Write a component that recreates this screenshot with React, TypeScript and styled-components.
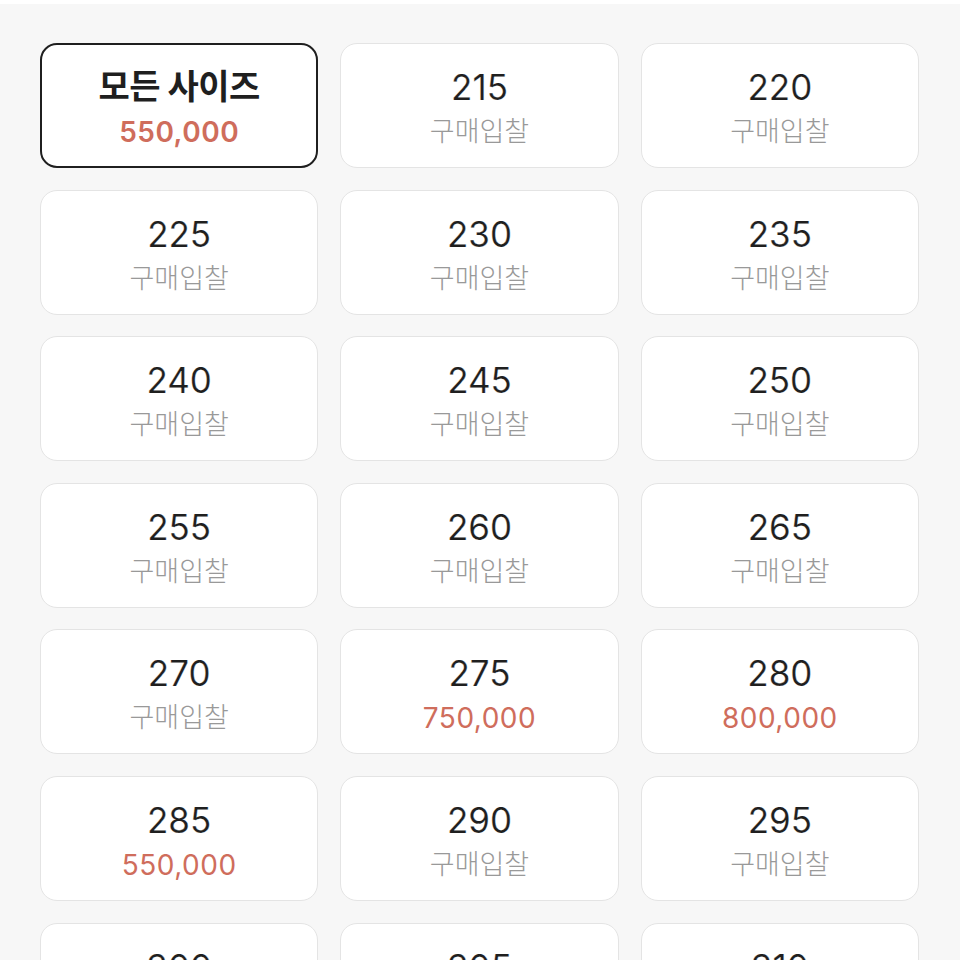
import React from 'react'
import styled, { createGlobalStyle } from 'styled-components'

const GlobalStyle = createGlobalStyle`
  html, body {
    margin: 0;
    padding: 0;
    background: #f7f7f7;
  }
  body {
    font-family: "Inter", "Noto Sans CJK KR", sans-serif;
  }
`

interface SizeItem {
  label: string
  price?: string
}

const sizes: SizeItem[] = [
  { label: '215' },
  { label: '220' },
  { label: '225' },
  { label: '230' },
  { label: '235' },
  { label: '240' },
  { label: '245' },
  { label: '250' },
  { label: '255' },
  { label: '260' },
  { label: '265' },
  { label: '270' },
  { label: '275', price: '750,000' },
  { label: '280', price: '800,000' },
  { label: '285', price: '550,000' },
  { label: '290' },
  { label: '295' },
  { label: '300' },
  { label: '305' },
  { label: '310' },
]

const App: React.FC = () => {
  return (
    <Page>
      <GlobalStyle />
      <TopBar />
      <Grid>
        <Card selected>
          <Title>모든 사이즈</Title>
          <Price bold>550,000</Price>
        </Card>
        {sizes.map((s) => (
          <Card key={s.label}>
            <Size>{s.label}</Size>
            {s.price ? <Price>{s.price}</Price> : <Bid>구매입찰</Bid>}
          </Card>
        ))}
      </Grid>
    </Page>
  )
}

export default App

const Page = styled.div`
  width: 960px;
  height: 960px;
  overflow: hidden;
  background: #f7f7f7;
`

const TopBar = styled.div`
  height: 4px;
  background: #ffffff;
`

const Grid = styled.div`
  display: grid;
  grid-template-columns: repeat(3, 1fr);
  grid-auto-rows: 125px;
  column-gap: 22px;
  row-gap: 21.6px;
  padding: 39px 41px 0 40px;
`

const Card = styled.div<{ selected?: boolean }>`
  display: flex;
  flex-direction: column;
  align-items: center;
  justify-content: center;
  gap: 4px;
  background: #ffffff;
  border: ${({ selected }) => (selected ? '2px solid #1f1f1f' : '1.5px solid #e4e4e4')};
  border-radius: 17px;
  box-sizing: border-box;
  padding-top: 7px;
`

const Size = styled.div`
  font-size: 35px;
  line-height: 42px;
  font-weight: 400;
  color: #1f1f1f;
  -webkit-text-stroke: 0.2px #ffffff;
`

const Title = styled.div`
  font-size: 34px;
  line-height: 42px;
  font-weight: 700;
  color: #1f1f1f;
  letter-spacing: -0.5px;
`

const Bid = styled.div`
  font-size: 27px;
  line-height: 40px;
  font-weight: 300;
  color: #999999;
`

const Price = styled.div<{ bold?: boolean }>`
  font-size: 28px;
  line-height: 40px;
  font-weight: ${({ bold }) => (bold ? 600 : 400)};
  color: #cf6d5c;
  letter-spacing: 0.5px;
`
